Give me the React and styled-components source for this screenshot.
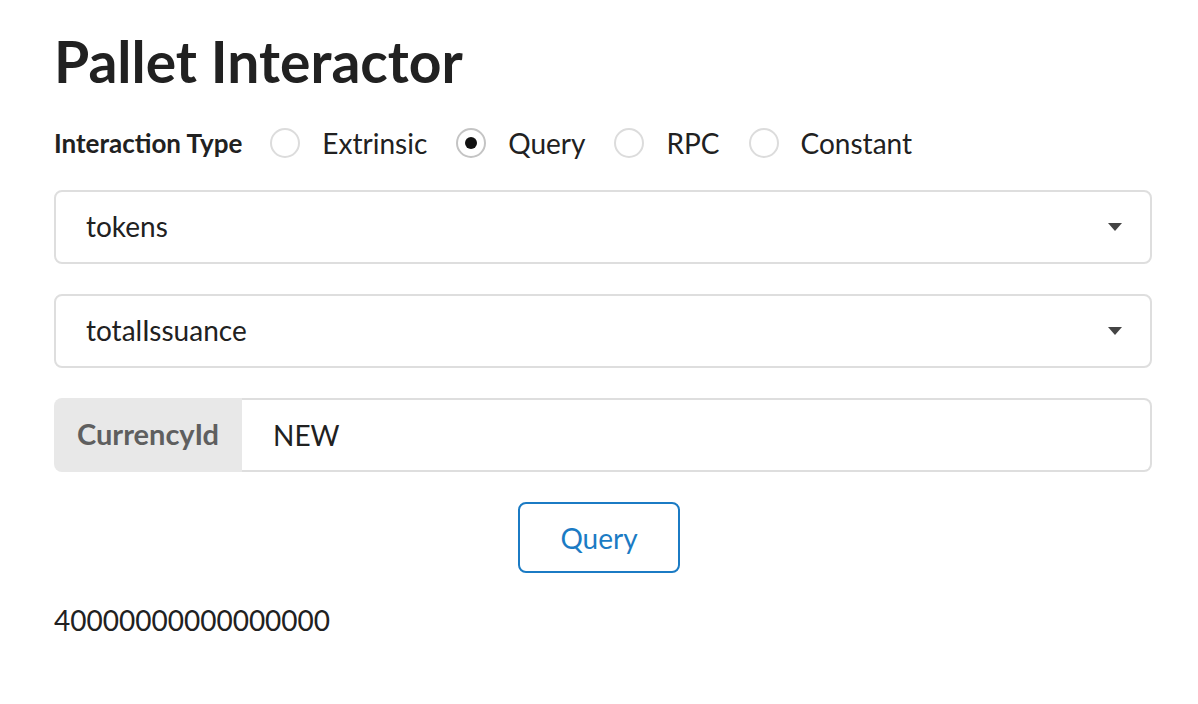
import React from 'react'
import styled, { createGlobalStyle } from 'styled-components'

const GlobalStyle = createGlobalStyle`
  body {
    margin: 0;
    background: #fff;
    font-family: Lato, "Helvetica Neue", Arial, sans-serif;
    color: rgba(0, 0, 0, 0.87);
  }
`

const Page = styled.div`
  width: 1098px;
  padding: 33px 46px 40px 54px;
  display: flex;
  flex-direction: column;
`

const Title = styled.h1`
  margin: 0;
  font-size: 57px;
  line-height: 56px;
  font-weight: 700;
  color: #212121;
`

const RadioRow = styled.div`
  display: flex;
  align-items: center;
  height: 30px;
  margin-top: 39px;
`

const RowLabel = styled.span`
  font-size: 26px;
  font-weight: 700;
  color: #212121;
  margin-right: 28px;
`

const RadioItem = styled.label`
  display: flex;
  align-items: center;
  margin-right: 29px;
  font-size: 28px;
  color: #212121;
`

const Circle = styled.span`
  box-sizing: border-box;
  width: 30px;
  height: 30px;
  border-radius: 50%;
  border: 2px solid ${(p) => (p.checked ? '#c4c4c4' : '#dcdcdc')};
  display: flex;
  align-items: center;
  justify-content: center;
  margin-right: 22px;

  &::after {
    content: '';
    display: ${(p) => (p.checked ? 'block' : 'none')};
    width: 12px;
    height: 12px;
    border-radius: 50%;
    background: #111;
  }
`

const Dropdown = styled.div`
  box-sizing: border-box;
  height: 74px;
  margin-top: ${(p) => p.top || 30}px;
  border: 2px solid #dedede;
  border-radius: 8px;
  display: flex;
  align-items: center;
  justify-content: space-between;
  padding: 0 28px 2px 30px;
  font-size: 28px;
  color: #212121;
`

const Caret = styled.span`
  width: 0;
  height: 0;
  margin-top: 2px;
  border-left: 7px solid transparent;
  border-right: 7px solid transparent;
  border-top: 8px solid #444;
`

const InputGroup = styled.div`
  box-sizing: border-box;
  height: 74px;
  margin-top: 30px;
  display: flex;
`

const InputLabel = styled.div`
  width: 188px;
  box-sizing: border-box;
  background: #e8e8e8;
  border-radius: 8px 0 0 8px;
  color: #5f5f5f;
  font-size: 29px;
  font-weight: 700;
  padding: 0 0 4px 23px;
  display: flex;
  align-items: center;
`

const InputField = styled.div`
  flex: 1;
  box-sizing: border-box;
  border: 2px solid #dedede;
  border-left: none;
  border-radius: 0 8px 8px 0;
  display: flex;
  align-items: center;
  padding-left: 31px;
  font-size: 28px;
  color: #212121;
`

const ButtonRow = styled.div`
  display: flex;
  justify-content: center;
  margin-top: 30px;
  padding-right: 8px;
`

const QueryButton = styled.button`
  box-sizing: border-box;
  width: 162px;
  height: 71px;
  background: #fff;
  border: 2px solid #1b7bc4;
  border-radius: 8px;
  color: #1b7bc4;
  font-family: Lato, sans-serif;
  font-size: 28px;
  font-weight: 400;
  padding: 0;
`

const Result = styled.div`
  margin-top: 27px;
  font-size: 28px;
  line-height: 40px;
  color: #212121;
`

const types = ['Extrinsic', 'Query', 'RPC', 'Constant']

const App = () => {
  return (
    <>
      <GlobalStyle />
      <Page>
        <Title>Pallet Interactor</Title>
        <RadioRow>
          <RowLabel>Interaction Type</RowLabel>
          {types.map((t) => (
            <RadioItem key={t}>
              <Circle checked={t === 'Query'} />
              {t}
            </RadioItem>
          ))}
        </RadioRow>
        <Dropdown top={32}>
          tokens
          <Caret />
        </Dropdown>
        <Dropdown>
          totalIssuance
          <Caret />
        </Dropdown>
        <InputGroup>
          <InputLabel>CurrencyId</InputLabel>
          <InputField>NEW</InputField>
        </InputGroup>
        <ButtonRow>
          <QueryButton>Query</QueryButton>
        </ButtonRow>
        <Result>40000000000000000</Result>
      </Page>
    </>
  )
}

export default App
